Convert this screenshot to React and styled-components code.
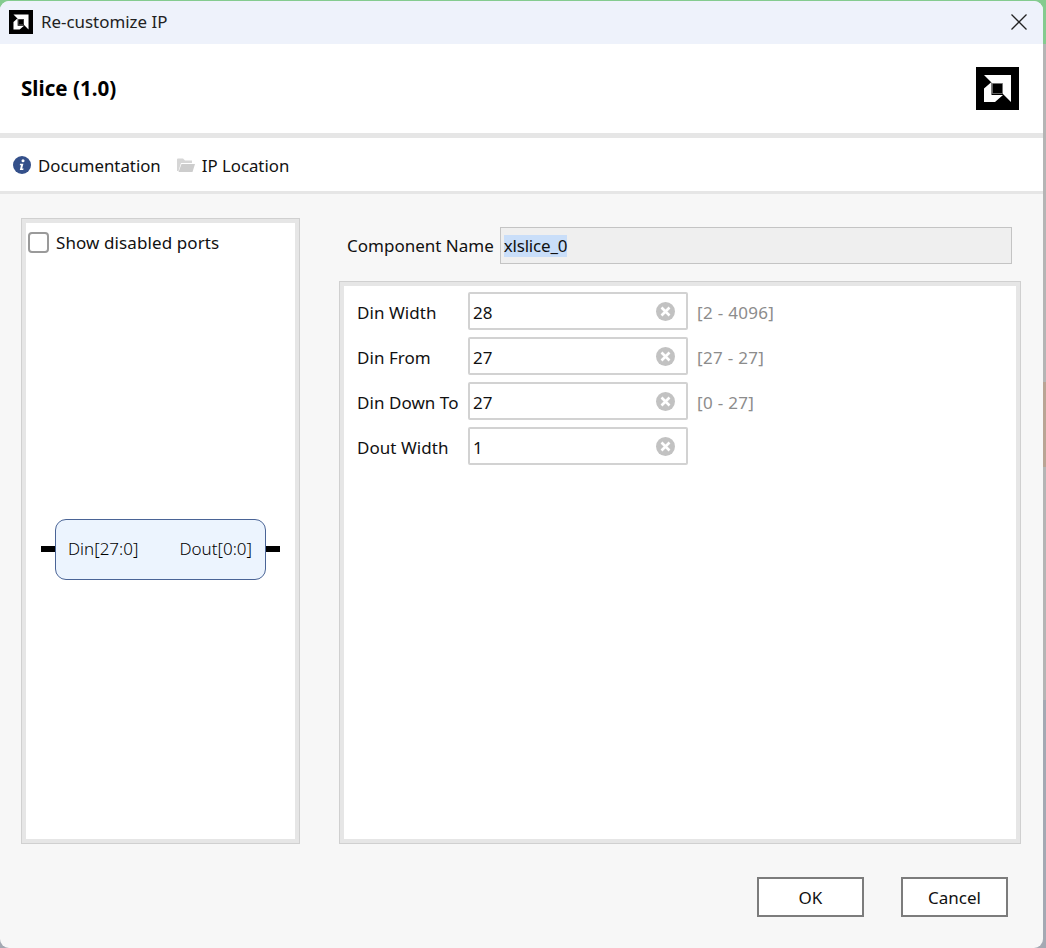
import React from 'react';
import styled, { createGlobalStyle } from 'styled-components';

const GlobalStyle = createGlobalStyle`
  html, body {
    margin: 0;
    padding: 0;
    background: #b5b5b5;
  }
  * {
    box-sizing: border-box;
  }
`;

// What shows behind the dialog: green app edge on top, grey down the side
const Desktop = styled.div`
  width: 1046px;
  height: 948px;
  padding: 1px 3px 0 0;
  background: linear-gradient(
    #84cb8f 0, #84cb8f 44px,
    #b5b5b5 44px, #b5b5b5 382px,
    #b9a595 382px, #b9a595 467px,
    #b5b5b5 467px, #b5b5b5 700px,
    #a4a9b3 700px, #a4a9b3 100%
  );
`;

// Whole dialog window
const Window = styled.div`
  height: 947px;
  display: flex;
  flex-direction: column;
  background: #f7f7f7;
  border-radius: 9px;
  overflow: hidden;
  font-family: "Noto Sans", "Open Sans", sans-serif;
  font-size: 17px;
  color: #111;
`;

const TitleBar = styled.div`
  height: 43px;
  flex: none;
  display: flex;
  align-items: center;
  gap: 8px;
  padding: 0 16px 2px 9px;
  background: #eef2fb;
  font-size: 16.9px;
  color: #222;
`;

const TitleText = styled.span`
  flex: 1;
`;

const Header = styled.div`
  height: 89px;
  flex: none;
  display: flex;
  align-items: center;
  justify-content: space-between;
  padding: 0 24px 0 21px;
  background: #fff;
  font-size: 20.6px;
  font-weight: 700;
  color: #000;
`;

const HeaderTitle = styled.span`
  padding-bottom: 2px;
`;

const Toolbar = styled.div`
  height: 58px;
  flex: none;
  display: flex;
  align-items: center;
  gap: 16px;
  padding: 1px 0 0 13px;
  background: #fff;
  border-top: 5px solid #e6e6e6;
  font-size: 16.8px;
`;

const ToolItem = styled.div`
  display: flex;
  align-items: center;
  gap: 7px;
`;

const Body = styled.div`
  height: 653px;
  flex: none;
  display: grid;
  grid-template-columns: 279px 682px;
  column-gap: 39px;
  padding: 24px 0 0 21px;
  border-top: 3px solid #e6e6e6;
`;

const SymbolPanel = styled.div`
  height: 626px;
  display: flex;
  flex-direction: column;
  background: #fff;
  border: 5px solid #e6e6e6;
  outline: 1px solid #d0d0d0;
  outline-offset: -1px;
  padding: 4px 0 0 2px;
`;

const CheckRow = styled.label`
  display: flex;
  align-items: center;
  gap: 7px;
  height: 30px;
  letter-spacing: 0.1px;
`;

const CheckBox = styled.span`
  width: 21px;
  height: 21px;
  background: #fff;
  border: 2px solid #9a9a9a;
  border-radius: 4px;
`;

const SymbolArea = styled.div`
  flex: 1;
  display: flex;
  align-items: center;
  padding: 2px 0 0 13px;
`;

const Port = styled.div`
  width: 14px;
  height: 6px;
  flex: none;
  background: #000;
`;

const Block = styled.div`
  width: 211px;
  height: 61px;
  flex: none;
  display: flex;
  align-items: center;
  justify-content: space-between;
  padding: 0 13px 2px 12px;
  background: #ecf4fe;
  border: 1px solid #4a6496;
  border-radius: 11px;
  font-size: 17px;
  font-weight: 300;
  color: #000;
`;

const RightColumn = styled.div`
  display: flex;
  flex-direction: column;
`;

const NameRow = styled.div`
  display: flex;
  align-items: center;
  gap: 6px;
  height: 37px;
  margin: 9px 9px 0 8px;
`;

const NameField = styled.div`
  flex: 1;
  height: 37px;
  display: flex;
  align-items: center;
  padding: 0 3px;
  background: #efefef;
  border: 1px solid #c4c4c4;
`;

const Selected = styled.span`
  background: #c9def9;
  line-height: 22px;
  letter-spacing: -0.2px;
`;

const ParamPanel = styled.div`
  height: 563px;
  margin-top: 17px;
  display: flex;
  flex-direction: column;
  gap: 7px;
  padding: 6px 0 0 13px;
  background: #fff;
  border: 5px solid #e6e6e6;
  outline: 1px solid #d0d0d0;
  outline-offset: -1px;
`;

const ParamRow = styled.div`
  display: flex;
  align-items: center;
  height: 38px;
`;

const ParamLabel = styled.span`
  width: 111px;
  flex: none;
  padding-top: 2px;
  letter-spacing: 0.05px;
`;

const ParamField = styled.div`
  width: 220px;
  height: 38px;
  flex: none;
  display: flex;
  align-items: center;
  justify-content: space-between;
  padding: 0 11px 0 3px;
  background: #fff;
  border: 2px solid #d2d2d2;
  border-radius: 2px;
`;

const ParamValue = styled.span`
  padding-top: 2px;
`;

const Range = styled.span`
  margin-left: 9px;
  padding-top: 2px;
  color: #8c8c8c;
  letter-spacing: 0.3px;
`;

const Footer = styled.div`
  display: flex;
  justify-content: flex-end;
  gap: 37px;
  padding: 33px 35px 0 0;
`;

const Button = styled.button`
  width: 107px;
  height: 40px;
  padding: 0;
  background: #fff;
  border: 2px solid #7c7c7c;
  border-radius: 0;
  font: inherit;
  color: #111;
`;

const AmdLogo = ({ size }) => (
  <svg width={size} height={size} viewBox="0 0 43 43">
    <rect width="43" height="43" fill="#000" />
    <path d="M8 8H35V35L26.5 26.5V16.5H16.5Z" fill="#fff" />
    <path d="M8 35V21.5L15.5 15V28H27L19 35Z" fill="#fff" />
    <rect x="16.5" y="16.5" width="10" height="10" fill="#000" stroke="#888" strokeWidth="0.7" />
  </svg>
);

const InfoIcon = () => (
  <svg width="18" height="18" viewBox="0 0 18 18">
    <circle cx="9" cy="9" r="9" fill="#34508a" />
    <circle cx="10" cy="4.8" r="1.5" fill="#fff" />
    <path d="M7 7.8H10.4L9.2 12.6H10.6L10.2 14H6.8L8 9.2H6.8Z" fill="#fff" />
  </svg>
);

const FolderIcon = () => (
  <svg width="18" height="16" viewBox="0 0 18 16">
    <path d="M0 2.5A1 1 0 0 1 1 1.5H6L8 3.5H15V6H4L1.5 14H0Z" fill="#d6d6d6" />
    <path d="M4.5 7H18L15.5 15H1.5Z" fill="#cdcdcd" />
  </svg>
);

const ClearIcon = () => (
  <svg width="19" height="19" viewBox="0 0 19 19">
    <circle cx="9.5" cy="9.5" r="9.5" fill="#c2c2c2" />
    <path d="M5.5 5.5L13.5 13.5M13.5 5.5L5.5 13.5" stroke="#fff" strokeWidth="2.6" />
  </svg>
);

const CloseIcon = () => (
  <svg width="16" height="16" viewBox="0 0 16 16">
    <path d="M0.5 0.5L15.5 15.5M15.5 0.5L0.5 15.5" stroke="#222" strokeWidth="1.3" />
  </svg>
);

const params = [
  { label: 'Din Width', value: '28', range: '[2 - 4096]' },
  { label: 'Din From', value: '27', range: '[27 - 27]' },
  { label: 'Din Down To', value: '27', range: '[0 - 27]' },
  { label: 'Dout Width', value: '1' },
];

const App = () => (
  <>
    <GlobalStyle />
    <Desktop>
      <Window>
        <TitleBar>
          <AmdLogo size={24} />
          <TitleText>Re-customize IP</TitleText>
          <CloseIcon />
        </TitleBar>
        <Header>
          <HeaderTitle>Slice (1.0)</HeaderTitle>
          <AmdLogo size={43} />
        </Header>
        <Toolbar>
          <ToolItem>
            <InfoIcon />
            Documentation
          </ToolItem>
          <ToolItem>
            <FolderIcon />
            IP Location
          </ToolItem>
        </Toolbar>
        <Body>
          <SymbolPanel>
            <CheckRow>
              <CheckBox />
              Show disabled ports
            </CheckRow>
            <SymbolArea>
              <Port />
              <Block>
                <span>Din[27:0]</span>
                <span>Dout[0:0]</span>
              </Block>
              <Port />
            </SymbolArea>
          </SymbolPanel>
          <RightColumn>
            <NameRow>
              Component Name
              <NameField>
                <Selected>xlslice_0</Selected>
              </NameField>
            </NameRow>
            <ParamPanel>
              {params.map((p) => (
                <ParamRow key={p.label}>
                  <ParamLabel>{p.label}</ParamLabel>
                  <ParamField>
                    <ParamValue>{p.value}</ParamValue>
                    <ClearIcon />
                  </ParamField>
                  {p.range && <Range>{p.range}</Range>}
                </ParamRow>
              ))}
            </ParamPanel>
          </RightColumn>
        </Body>
        <Footer>
          <Button>OK</Button>
          <Button>Cancel</Button>
        </Footer>
      </Window>
    </Desktop>
  </>
);

export default App;
